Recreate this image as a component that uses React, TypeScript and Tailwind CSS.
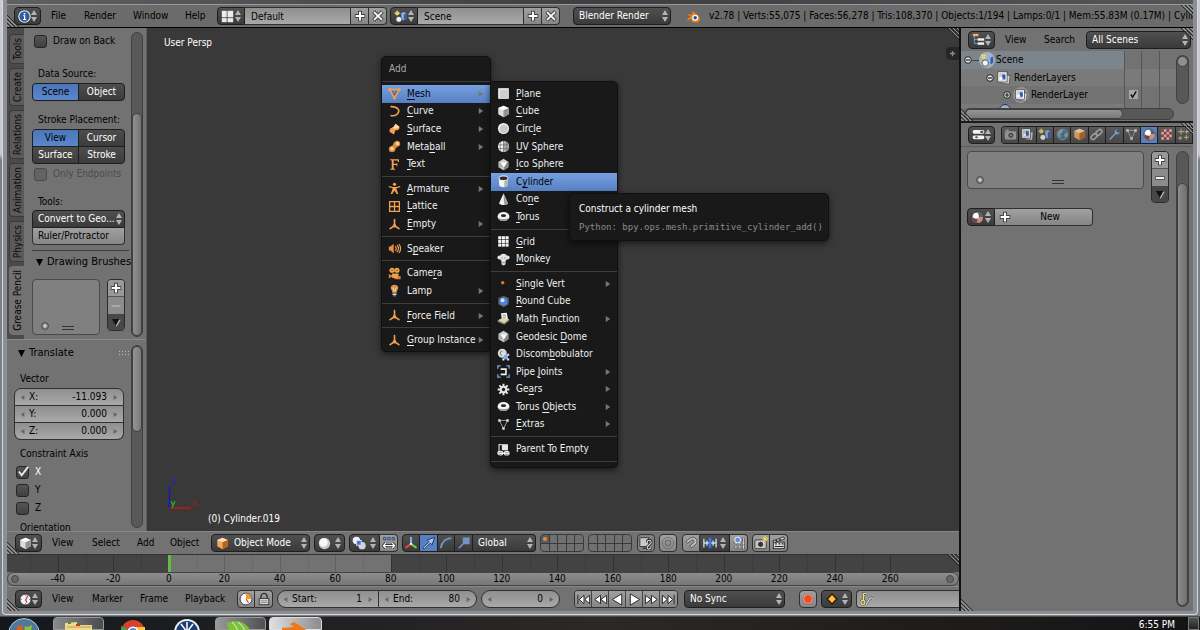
import React, { useState } from "react";

/* ---------- icons ---------- */

type IconProps = { name: string; className?: string };

const O = "#f0a050";

const glyphs: Record<string, React.ReactNode> = {
  info: (
    <g>
      <circle cx="8" cy="8" r="7" fill="#2d5c9c" stroke="#e8eef6" strokeWidth="1.3" />
      <path d="M6.3 6.6h2.6v4.6h1.2v1.2H6.2v-1.2h1.2V7.8H6.3zM7 3.6h2v2H7z" fill="#fff" />
    </g>
  ),
  layout: (
    <g fill="#ececec">
      <rect x="1" y="1" width="6" height="8" />
      <rect x="1" y="10" width="6" height="5" />
      <rect x="8" y="1" width="7" height="8" />
      <rect x="8" y="10" width="7" height="5" />
    </g>
  ),
  scene: (
    <g>
      <circle cx="4" cy="4" r="2.6" fill="#efe98a" />
      <path d="M4 0v8M0 4h8" stroke="#c9c04a" strokeWidth=".8" />
      <path d="M9 4l3-1.5L15 4v7l-3 2-3-2z" fill="#8db3ee" />
      <path d="M12 5.5L15 4v7l-3 2z" fill="#2f5fae" />
      <circle cx="6" cy="11.5" r="3.6" fill="#f4f4f4" stroke="#333" strokeWidth=".8" />
    </g>
  ),
  blender: (
    <g>
      <path d="M.8 11.2l5-4H2.5V5.7h5.4L6 4l1.4-1.5 5.3 4.2c4 3.3 1.8 7.8-2.7 7.8-3.2 0-5.2-2-5-4.4L2.6 12z" fill="#f08019" />
      <circle cx="9.8" cy="9.4" r="3.2" fill="#fff" />
      <circle cx="9.8" cy="9.4" r="1.9" fill="#1d559c" />
    </g>
  ),
  tree: (
    <g>
      <rect x="1" y="1" width="7" height="3" fill="#f0b070" />
      <path d="M3 4v9h4M3 8h4" stroke="#7fa5dc" fill="none" />
      <rect x="7" y="6.5" width="8" height="3" fill="#f2f2f2" />
      <rect x="7" y="11.5" width="8" height="3" fill="#f2f2f2" />
    </g>
  ),
  sliders: (
    <g>
      <rect x=".8" y="2.5" width="14.4" height="4.5" rx="2" fill="#f2f2f2" />
      <rect x="10" y="3.5" width="4" height="2.5" rx="1" fill="#555" />
      <rect x=".8" y="9.2" width="14.4" height="4.5" rx="2" fill="#f2f2f2" />
      <rect x="4" y="10.2" width="3" height="2.5" rx="1" fill="#555" />
    </g>
  ),
  mesh: (
    <g fill="none" stroke={O} strokeWidth="1.8">
      <path d="M2 3h12L8 14z" />
      <path d="M5.5 4.5L8 10l2.5-5.5" strokeWidth="1" stroke="#8a4a18" />
      <path d="M.5 1.500h3.500v3H.5zM12 1.500h3.500v3H12zM6.500 12h3v3h-3z" fill={O} stroke="none" />
    </g>
  ),
  curve: <path d="M3 2c9-.5 13 5 8 9.500-2 1.600-5 2-8 1.500" fill="none" stroke={O} strokeWidth="2" />,
  surface: (
    <g>
      <path d="M9 1l5 3.500c.5 4-2 4.500-5 4.500L7.500 14 2 11c-.5-4 1-5 4-5.500z" fill={O} />
      <path d="M9 1l5 3.500c-1 2-3 2-5.500 2.500L5 5.800C8 5 9 3 9 1z" fill="#ffd9ae" />
    </g>
  ),
  metaball: (
    <g>
      <path d="M11 1a4 4 0 014 4c0 3-3 3-5 4.500-1 1-.5 5.500-5 5.500a4 4 0 01-4-4c0-4 4-3.500 5-5C6.500 4 8 1 11 1z" fill="#dd8c3e" />
      <circle cx="11.500" cy="4.500" r="2" fill="#ffd9ae" />
      <circle cx="5" cy="10.500" r="2" fill="#ffd9ae" />
    </g>
  ),
  fontobj: <path d="M2.500 1.500h11v3.500h-1.200L11.500 3H7v4.200h3.500V6h1v4h-1V8.500H7V13l1.800.5v1h-6v-1l1.800-.5V3l-2.100-.5z" fill={O} />,
  armature: (
    <g fill={O}>
      <circle cx="8" cy="2.800" r="2" />
      <path d="M1 4.800l5 1.200h4l5-1.200v1.700l-4.700 1.300.5 2 2 5h-2L8 10.800 5.200 14.800h-2l2-5 .5-2L1 6.500z" />
    </g>
  ),
  lattice: <path d="M2 2h12v12H2zM2 8h12M8 2v12" fill="none" stroke={O} strokeWidth="1.600" />,
  empty: (
    <g stroke={O} strokeWidth="2" strokeLinecap="round" fill="none">
      <path d="M8 2v7M8 9.500L2.500 13M8 9.500L13.500 13" />
      <circle cx="8" cy="9.500" r="1.200" fill="#ffd9ae" />
    </g>
  ),
  speaker: (
    <g fill="none" stroke={O} strokeWidth="1.400">
      <path d="M1 5.500h2L7 2v12l-4-3.500H1z" fill="#e09040" stroke="none" />
      <path d="M9 5c1.500 2 1.500 4 0 6M11 3.500c2.500 3 2.500 6 0 9M13.500 2.500c2.500 3.500 2.500 7.500 0 11" />
    </g>
  ),
  camera: (
    <g fill={O}>
      <circle cx="5" cy="4" r="3.200" />
      <circle cx="11" cy="4" r="3.200" />
      <rect x="5" y="8" width="8" height="5.500" />
      <path d="M1 8.500l4 1.500v2l-4 2zM13 11h2.500v4H8v-1.500h5z" fill="#d98230" />
      <path d="M4 4h2M10 4h2" stroke="#6a3a10" />
    </g>
  ),
  lamp: (
    <g>
      <path d="M8 .8c5.500 0 5.500 5 3 7.200V10H5V8C2.500 5.800 2.500.8 8 .8z" fill="#d9924e" />
      <path d="M6 4.500L7.500 9M10 4.500L8.500 9" stroke="#ffe2c0" />
      <path d="M5.500 10.500h5v1.200h-5zM5.500 12.300h5v1.200h-5zM6.500 14h3v1h-3z" fill="#ddd" />
    </g>
  ),
  plane: (
    <g>
      <rect x="1.500" y="1.500" width="13" height="13" fill="#fff" />
      <rect x="3" y="3" width="10.500" height="10.500" fill="#cfcfcf" />
    </g>
  ),
  cube: (
    <g>
      <path d="M8 1l6.500 2.800v7.700L8 15.200 1.500 11.500V3.800z" fill="#dcdcdc" />
      <path d="M8 1l6.500 2.800L8 6.500 1.500 3.800z" fill="#fff" />
      <path d="M8 6.500l6.500-2.700v7.700L8 15.200z" fill="#929292" />
    </g>
  ),
  cubeorange: (
    <g>
      <path d="M8 1l6.500 2.800v7.700L8 15.200 1.500 11.500V3.800z" fill="#f0a860" />
      <path d="M8 1l6.500 2.800L8 6.500 1.500 3.800z" fill="#ffdfba" />
      <path d="M8 6.500l6.500-2.700v7.700L8 15.200z" fill="#b86418" />
    </g>
  ),
  circle: (
    <g>
      <circle cx="8" cy="8" r="6.800" fill="#f6f6f6" />
      <circle cx="8.300" cy="8.500" r="5.300" fill="#c8c8c8" />
    </g>
  ),
  ball: (
    <g>
      <circle cx="8" cy="8" r="7" fill="#c9c9c9" />
      <circle cx="6.800" cy="6.800" r="5.200" fill="#f7f7f7" />
    </g>
  ),
  uvsphere: (
    <g>
      <circle cx="8" cy="8" r="6.800" fill="#efefef" />
      <path d="M8 1.200a6.800 6.800 0 010 13.600z" fill="#a8a8a8" />
      <path d="M8 1v14M1.500 6h13M1.500 10.500h13M4.800 2C3.500 5 3.500 11 4.800 14M11.200 2c1.300 3 1.300 9 0 12" stroke="#666" strokeWidth=".8" fill="none" />
    </g>
  ),
  icosphere: (
    <g>
      <path d="M8 1l6 3.500v7L8 15l-6-3.500v-7z" fill="#d0d0d0" />
      <path d="M4 5.500h8.500L8.500 12z" fill="#fff" />
      <path d="M14 4.500v7L8 15l.5-3L12.500 5.500z" fill="#868686" />
      <path d="M2 4.500L4 5.500 8.500 12 2 11.500z" fill="#b0b0b0" />
    </g>
  ),
  cylinder: (
    <g>
      <path d="M2.500 4v8c0 4 11 4 11 0V4z" fill="#f4f4f4" />
      <path d="M9 5h4.500v7c0 2-2 3-4.500 3z" fill="#b4b4b4" />
      <ellipse cx="8" cy="4" rx="5.500" ry="2.800" fill="#2a2a2a" stroke="#fff" strokeWidth="1.200" />
    </g>
  ),
  cone: (
    <g>
      <path d="M8 .5l5.500 12c-1 3-10 3-11 0z" fill="#f0f0f0" />
      <path d="M8 .5l5.500 12c-.5 1.500-2.500 2.200-4.500 2.200z" fill="#9c9c9c" />
    </g>
  ),
  torus: (
    <g>
      <ellipse cx="8" cy="8" rx="7.300" ry="5.600" fill="#f2f2f2" />
      <path d="M1 9.500c2 5.400 12 5.400 14 0-2 2-12 2-14 0z" fill="#9a9a9a" />
      <ellipse cx="8" cy="7" rx="3.200" ry="1.700" fill="#222" />
    </g>
  ),
  grid: (
    <g fill="#f4f4f4">
      {[1.5, 6, 10.5].map((x) => [1.5, 6, 10.5].map((y) => <rect key={`${x}-${y}`} x={x} y={y} width="3.800" height="3.800" />))}
    </g>
  ),
  monkey: (
    <g fill="#e4e4e4">
      <circle cx="8" cy="5.500" r="4.500" />
      <circle cx="3" cy="5.500" r="2.500" />
      <circle cx="13" cy="5.500" r="2.500" />
      <path d="M5.500 8h5v5.500c-1 2-4 2-5 0z" />
      <path d="M5.500 6h1.500M9 6h1.500M6.500 12h3" stroke="#666" />
    </g>
  ),
  vert: <circle cx="7" cy="7" r="2" fill="#f08a35" stroke="#7a3d0d" strokeWidth=".6" />,
  roundcube: (
    <g>
      <path d="M8 .8l6.500 3v7.700L8 15.200 1.500 11.500V3.800z" fill="#55595f" />
      <circle cx="8" cy="8" r="5" fill="#4d86dd" />
      <circle cx="6.800" cy="6.500" r="2.400" fill="#cfe2ff" />
    </g>
  ),
  math: (
    <g>
      <path d="M5 1.500L12 1l1.500 8L6 10z" fill="#f4f4f4" />
      <path d="M7 4h4M7.500 6.500h3.500" stroke="#777" />
      <path d="M1 10l6-3 8 2-6 5z" fill="#d9d5b0" />
      <path d="M1 10l8 4v1.500L1 12zM9 14l6-5v1.500L9 15.500z" fill="#a5a078" />
    </g>
  ),
  discomb: (
    <g>
      <circle cx="6.500" cy="6.500" r="5.500" fill="#d9d9d9" />
      <path d="M6.500 4a2.500 2.500 0 100 5" fill="none" stroke="#777" strokeWidth="1.200" />
      <rect x="8" y="8.500" width="5.500" height="5.500" fill="#7fa6e6" />
      <path d="M6.500 7h2.500v2.500H6.500zM12.500 7H15v2.500h-2.500zM6.500 13h2.500v2.500H6.500zM12.500 13H15v2.500h-2.500z" fill="#dfe9fb" />
    </g>
  ),
  pipe: (
    <g fill="none">
      <path d="M1 4.500V1h3.500M11.500 1H15v3.500M15 11.500V15h-3.500M4.500 15H1v-3.500" stroke="#7da3e0" strokeWidth="1.500" />
      <path d="M4.500 5h6.500v6.500H4.500" stroke="#f0f0f0" strokeWidth="2" />
    </g>
  ),
  gear: (
    <g>
      <path d="M8 .8v14.400M.8 8h14.400M2.900 2.900l10.200 10.200M13.100 2.900L2.900 13.100" stroke="#e6e6e6" strokeWidth="2.400" />
      <circle cx="8" cy="8" r="4.700" fill="#e6e6e6" />
      <circle cx="8" cy="8" r="2.100" fill="#222" />
    </g>
  ),
  extras: (
    <g fill="none" stroke="#b4b4b4">
      <path d="M3 3h10L8 13z" />
      <path d="M1.500 1.500h3v3h-3zM11.500 1.500h3v3h-3zM6.500 11.500h3v3h-3z" fill="#e0e0e0" stroke="none" />
    </g>
  ),
  parent: (
    <g>
      <rect x="6" y="1.500" width="7.500" height="7.500" fill="#e8e8e8" />
      <path d="M6 2H2.500v8" fill="none" stroke="#cfcfcf" strokeWidth="1.500" />
      <path d="M1.500 12.500h13" stroke="#ededed" strokeWidth="2" />
      <ellipse cx="4" cy="12.500" rx="3" ry="2.200" fill="none" stroke="#ededed" strokeWidth="1.300" />
      <ellipse cx="12" cy="12.500" rx="3" ry="2.200" fill="none" stroke="#ededed" strokeWidth="1.300" />
    </g>
  ),
  renderlayers: (
    <g>
      <path d="M6 4l9 1-1 10-9-1z" fill="#d8d2b8" stroke="#444" strokeWidth=".8" />
      <rect x="1" y="1" width="10.500" height="11.500" fill="#fff" stroke="#333" strokeWidth=".8" />
      <rect x="2.500" y="2.500" width="7.500" height="8.500" fill="#bcd0ee" />
      <path d="M6 4h3.500v5.500H6z" fill="#2c5cab" />
      <circle cx="4.500" cy="8.500" r="1.800" fill="#fff" />
      <circle cx="4" cy="4" r="1.200" fill="#e5da5a" />
    </g>
  ),
  photo: (
    <g>
      <rect x="1" y="4" width="14" height="10" rx="1" fill="#a0a0a0" />
      <rect x="2" y="2" width="4" height="2" fill="#a0a0a0" />
      <circle cx="8.500" cy="9" r="3.800" fill="#3a3a3a" stroke="#c4c4c4" />
      <circle cx="8.500" cy="9" r="1.500" fill="#888" />
    </g>
  ),
  world: (
    <g>
      <circle cx="8" cy="8" r="6.500" fill="#3e6fa9" stroke="#9db9da" strokeWidth=".8" />
      <path d="M3 5c2-3 5-3 6-2L7 6 5 7l1 3-1 2C3 11 2 8 3 5zM10 7l4-1c.5 3-1 5-3 6z" fill="#8fb08a" />
    </g>
  ),
  chain: (
    <g fill="none" stroke="#b4b4b4" strokeWidth="1.800">
      <rect x="-4.200" y="-2.500" width="8.400" height="5" rx="2.500" transform="translate(5 10.500) rotate(-42)" />
      <rect x="-4.200" y="-2.500" width="8.400" height="5" rx="2.500" transform="translate(11 5.500) rotate(-42)" />
    </g>
  ),
  wrench: <path d="M1.500 13L8 6.500C7 3.500 9 1 12 1.500L10.500 4l1.500 1.500L14.500 4c.5 3-2 5-5 4L3.500 14.500c-1.500 1-3-.5-2-1.500z" fill="#8fb0e0" stroke="#2a3c58" strokeWidth=".6" />,
  material: (
    <g>
      <circle cx="8" cy="8" r="6.800" fill="#f0e8e4" stroke="#222" strokeWidth=".8" />
      <path d="M8 8V1.500A6.500 6.500 0 0114.500 8z" fill="#5c5c5c" />
      <path d="M8 8v6.500A6.500 6.500 0 0014.500 8z" fill="#d08a78" />
      <path d="M8 8v6.500A6.500 6.500 0 011.500 8z" fill="#6b4640" />
      <circle cx="6.300" cy="6" r="3.400" fill="#fff" />
    </g>
  ),
  texture: (
    <g>
      <rect x="1.500" y="1.500" width="13" height="13" fill="#d9c4c0" />
      {[0, 1, 2, 3].map((r) => [0, 1].map((c) => <rect key={`${r}${c}`} x={1.5 + c * 6.5 + (r % 2) * 3.25} y={1.5 + r * 3.25} width="3.250" height="3.250" fill="#a02f2f" />))}
    </g>
  ),
  particles: (
    <g stroke="#c4b47a" strokeWidth="1.400">
      <path d="M5 1v7M1.500 4.500h7M12 2v5M9.500 4.500h5M4 10v5M1.500 12.500h5M11.500 8.500v6M8.500 11.500h6" />
    </g>
  ),
  clock: (
    <g>
      <circle cx="8" cy="8" r="6.800" fill="#f3f3f3" stroke="#222" />
      <path d="M8 9l3-6" stroke="#c33" strokeWidth="1.500" />
      <path d="M8 8.500L10 12" stroke="#555" strokeWidth="1.300" />
      <path d="M8 2v1.500M8 12.500V14M2 8h1.500M12.500 8H14" stroke="#555" />
    </g>
  ),
  preview: (
    <g>
      <circle cx="8" cy="8" r="6.800" fill="#f6f6f6" stroke="#333" />
      <path d="M8 8V1.500A6.500 6.500 0 0114.500 8z" fill="#f39a2e" />
      <path d="M8 8l3 4.500" stroke="#c33" strokeWidth="1.200" />
    </g>
  ),
  lock: (
    <g>
      <path d="M4.500 8V5c0-4.500 7-4.500 7 0v3" fill="none" stroke="#333" strokeWidth="1.600" />
      <rect x="2.500" y="7.500" width="11" height="7" fill="#d5d5d5" stroke="#333" />
      <path d="M4 10h8M4 12h8" stroke="#888" />
    </g>
  ),
  pivot: (
    <g>
      <circle cx="5" cy="5" r="4.200" fill="#f2f2f2" />
      <circle cx="11.500" cy="11" r="4.200" fill="#d4d4d4" />
      <rect x="5" y="5" width="5.500" height="5.500" fill="#3f78d8" stroke="#dbe8ff" />
    </g>
  ),
  centers: (
    <g>
      <path d="M1 11h14M4.500 8L1.500 11l3 3M11.500 8l3 3-3 3" stroke="#222" strokeWidth="3" fill="none" />
      <path d="M1.500 11h13M4.500 8L1.500 11l3 3M11.500 8l3 3-3 3" stroke="#fff" strokeWidth="1.500" fill="none" />
      <path d="M1.500 1.500h3v3h-3zM6.500 1.500h3v3h-3zM11.500 1.500h3v3h-3z" fill="#5e8fe0" stroke="#223" strokeWidth=".6" />
    </g>
  ),
  manip: (
    <g fill="none" strokeWidth="2.400" strokeLinecap="round">
      <path d="M8 8.500V2" stroke="#7db2f0" />
      <path d="M8 9l-5.500 4" stroke="#e0483a" />
      <path d="M8 9l5.500 4" stroke="#6ccc4f" />
      <circle cx="8" cy="9" r="1.200" fill="#fff" stroke="none" />
    </g>
  ),
  arrow: <path d="M1 13.500L8 6.500 6 4.500 14.500 1.500 11.500 10l-2-2-7 7z" fill="#a8c6f5" stroke="#1c2c4a" />,
  arc: <path d="M2 14C3 7 7 3 14 2.500" fill="none" stroke="#7595c4" strokeWidth="2" />,
  scale: <path d="M2 14l6-6M7.500 2.500h6v6h-6z" fill="#7595c4" stroke="#7595c4" strokeWidth="1.800" />,
  lockcam: (
    <g>
      <rect x="1" y="2" width="10" height="10" fill="#c9c9c9" stroke="#333" />
      <path d="M4 14h8" stroke="#333" strokeWidth="1.400" />
      <path d="M9.500 7c0-3 4.500-3 4.500 0s-4.500 3-4.500 6 4.500 2 4.500-1" fill="none" stroke="#222" strokeWidth="3" />
      <path d="M9.500 7c0-3 4.500-3 4.500 0s-4.500 3-4.500 6 4.500 2 4.500-1" fill="none" stroke="#e4e4e4" strokeWidth="1.200" />
    </g>
  ),
  prop: (
    <g fill="none" stroke="#6e6e6e">
      <circle cx="8" cy="8" r="6.500" />
      <circle cx="8" cy="8" r="3" strokeWidth="1.400" />
    </g>
  ),
  magnet: <path d="M2 6.500L7 2c5-3 10 3 6.500 7l-4.500 4.500-2-2 4-4.500c1-2-1-3.500-2.500-2.500L4 9z" transform="rotate(6 8 8)" fill="#bcbcbc" stroke="#555" />,
  snapinc: (
    <g>
      <path d="M1 3v10M15 3v10M4.500 5v6M11.500 5v6M1 8h14" stroke="#c9dcf8" strokeWidth="1.500" />
      <path d="M8 2v12" stroke="#3c78e0" strokeWidth="3" />
    </g>
  ),
  snapgrid: (
    <g>
      <path d="M2 8h13M2 12.500h13M4.500 7v8M9 4v11M13 2v13" stroke="#222" strokeWidth="2.200" />
      <path d="M2 8h13M2 12.500h13M4.500 7v8M9 4v11M13 2v13" stroke="#eee" strokeWidth="1" />
      <circle cx="6.500" cy="4.500" r="3.300" fill="#5c92e6" stroke="#fff" />
    </g>
  ),
  snapshot: (
    <g>
      <rect x="1" y="4.500" width="13" height="10" rx="1" fill="#c8c0b4" stroke="#222" strokeWidth=".8" />
      <circle cx="7.500" cy="9.500" r="3.600" fill="#333" stroke="#eee" />
      <path d="M12.500 0v7M9 3.500h7M10.200 1.200l4.600 4.600M14.800 1.200l-4.600 4.600" stroke="#f6e35c" />
    </g>
  ),
  clapper: (
    <g>
      <rect x="1.500" y="7" width="12.500" height="7.500" fill="#ddd" stroke="#222" />
      <path d="M1 5.500L13.500 1l.8 2.400L2 7.500z" fill="#f2f2f2" stroke="#222" />
      <path d="M4 4.500l2 1.500M8 3l2 1.500M3.500 9h2M7.500 9h2M11 9h2M3 12h10" stroke="#222" strokeWidth="1.300" />
    </g>
  ),
  rec: (
    <g>
      <circle cx="8" cy="8" r="5.600" fill="#fff" stroke="#a33" strokeWidth=".8" />
      <circle cx="8" cy="8" r="4.500" fill="#f04a20" />
    </g>
  ),
  diamond: <path d="M8 2.500L13.500 8 8 13.500 2.500 8z" fill="#ffbf3a" stroke="#241300" strokeWidth="1.400" />,
  key: (
    <g fill="none">
      <path d="M5 10V1.500h3M5 4.500h2.500" stroke="#44411c" strokeWidth="2.600" />
      <circle cx="4.500" cy="12" r="2.300" stroke="#44411c" strokeWidth="2.600" />
      <path d="M5 10V1.500h3M5 4.500h2.500" stroke="#e6de96" strokeWidth="1.500" />
      <circle cx="4.500" cy="12" r="2.300" stroke="#e6de96" strokeWidth="1.500" />
      <path d="M8.500 13.500l4-6c1-1.500 2.500-1 3 .5" stroke="#555" strokeWidth="2.800" />
      <path d="M8.500 13.500l4-6c1-1.500 2.500-1 3 .5" stroke="#ddd" strokeWidth="1.300" />
    </g>
  ),
  plus: (
    <g fill="none">
      <path d="M8 2v12M2 8h12" stroke="#444" strokeWidth="4.400" />
      <path d="M8 3v10M3 8h10" stroke="#fff" strokeWidth="2.200" />
    </g>
  ),
  minus: (
    <g fill="none">
      <path d="M1.500 8h13" stroke="#444" strokeWidth="4.600" />
      <path d="M2.500 8h11" stroke="#f4f4f4" strokeWidth="2.400" />
    </g>
  ),
  minusfaint: <path d="M2 8h12" stroke="#a9a9a9" strokeWidth="2.400" />,
  cross: (
    <g fill="none">
      <path d="M3 3l10 10M13 3L3 13" stroke="#444" strokeWidth="4.400" />
      <path d="M3.500 3.500l9 9M12.500 3.500l-9 9" stroke="#fff" strokeWidth="2" />
    </g>
  ),
  down: (
    <g>
      <path d="M1.500 3h13L8 14.500z" fill="#111" />
      <path d="M12 3.500h2.500L8 14.500 7 12.500z" fill="#b8b8b8" />
    </g>
  ),
  first: <path d="M2 3v10M8.500 3.500v9L3.500 8zM14.500 3.500v9L9.500 8z" />,
  prev: <path d="M8 3.500v9L2 8zM14.500 3.500v9L8.500 8z" />,
  back: <path d="M12.500 2v12L2.500 8z" />,
  play: <path d="M3.500 2v12l10-6z" />,
  next: <path d="M8 3.500v9l6-4.500zM1.500 3.500v9L7.500 8z" />,
  last: <path d="M14 3v10M7.500 3.500v9l5-4.500zM1.500 3.500v9l5-4.500z" />,
};

const Icon = ({ name, className = "size-[14px]" }: IconProps) => (
  <svg viewBox="0 0 16 16" aria-hidden="true" className={`shrink-0 ${className}`}>
    {glyphs[name]}
  </svg>
);

const UpDown = ({ className = "" }: { className?: string }) => (
  <svg viewBox="0 0 6 12" aria-hidden="true" className={`pointer-events-none h-[12px] w-[6px] shrink-0 ${className}`}>
    <path d="M3 0l3 5H0zM3 12l3-5H0z" fill="#b4b4b4" />
  </svg>
);

const Tri = ({ dir, className = "" }: { dir: "left" | "right" | "down"; className?: string }) => (
  <svg viewBox="0 0 8 8" aria-hidden="true" className={`shrink-0 ${className}`}>
    <path d={dir === "left" ? "M7 0v8L1 4z" : dir === "right" ? "M1 0v8l6-4z" : "M0 0h8L4 8z"} fill="currentColor" />
  </svg>
);

const Grip = ({ corner }: { corner: "tr" | "bl" }) => (
  <svg
    viewBox="0 0 12 12"
    aria-hidden="true"
    className={corner === "tr" ? "pointer-events-none absolute top-0 right-0 size-[12px]" : "pointer-events-none absolute bottom-0 left-0 size-[12px]"}
  >
    <g transform={corner === "bl" ? "rotate(180 6 6)" : undefined}>
      <path d="M0 0l12 12M4 0l8 8M8 0l4 4" stroke="#2a2a2a" strokeWidth="1" />
      <path d="M2 0l10 10M6 0l6 6M10 0l2 2" stroke="#9c9c9c" strokeWidth=".9" />
    </g>
  </svg>
);

/* ---------- controls ---------- */

const dark = "border border-[#1e1e1e] bg-linear-to-b from-[#505050] to-[#3a3a3a]";
const light = "border border-[#303030] bg-linear-to-b from-[#a0a0a0] to-[#868686]";
const field = "border border-[#303030] bg-linear-to-b from-[#8f8f8f] to-[#a9a9a9]";

const EditorButton = ({ icon, label }: { icon: string; label: string }) => (
  <button type="button" aria-label={label} className={`flex h-[18px] w-[27px] shrink-0 items-center justify-between rounded px-[3px] ${dark}`}>
    <Icon name={icon} className="size-[13px]" />
    <UpDown />
  </button>
);

const IconButton = ({ icon, label, className = "" }: { icon: string; label: string; className?: string }) => (
  <button type="button" aria-label={label} className={`flex h-[18px] w-[18px] shrink-0 items-center justify-center ${className}`}>
    <Icon name={icon} className="size-[14px]" />
  </button>
);

const DropDown = ({ label, value, icon, className = "" }: { label: string; value: string; icon?: string; className?: string }) => (
  <div className={`relative flex h-[18px] shrink-0 items-center ${dark} ${className}`}>
    {icon && <Icon name={icon} className="ml-1 size-[13px]" />}
    <select aria-label={label} defaultValue={value} className="h-full min-w-0 flex-1 appearance-none bg-transparent pl-[5px] text-white outline-none">
      <option>{value}</option>
    </select>
    <UpDown className="mr-[2px]" />
  </div>
);

const MenuButtons = ({ items }: { items: [string, string][] }) => (
  <>
    {items.map(([text, width]) => (
      <button key={text} type="button" className={`shrink-0 text-left ${width}`}>
        {text}
      </button>
    ))}
  </>
);

const DataBlock = ({ icon, name }: { icon: string; name: string }) => (
  <div className="flex shrink-0">
    <button type="button" aria-label={`Browse ${name}`} className={`flex h-[18px] w-[28px] items-center justify-between rounded-l px-[3px] ${dark}`}>
      <Icon name={icon} className="size-[13px]" />
      <UpDown />
    </button>
    <input aria-label={name} defaultValue={name} className={`h-[18px] w-[106px] border-l-0 px-[6px] outline-none ${field}`} />
    <IconButton icon="plus" label={`Add ${name}`} className={`border-l-0 p-px ${light}`} />
    <IconButton icon="cross" label={`Remove ${name}`} className={`rounded-r border-l-0 p-px ${light}`} />
  </div>
);

const Check = ({ label, checked, muted }: { label: string; checked?: boolean; muted?: boolean }) => (
  <label className={`flex h-[18px] items-center gap-[6px] ${muted ? "text-[#4c4c4c]" : ""}`}>
    <span className="relative flex">
      <input
        type="checkbox"
        defaultChecked={checked}
        className={`peer size-[13px] appearance-none rounded-[3px] border ${muted ? "border-[#4a4a4a] bg-[#636363]" : "border-[#262626] bg-linear-to-b from-[#555] to-[#404040]"}`}
      />
      <svg viewBox="0 0 14 14" aria-hidden="true" className="pointer-events-none absolute bottom-px left-px hidden size-[13px] peer-checked:block">
        <path d="M2 7l3 4L12 2" fill="none" stroke="#ececec" strokeWidth="2" />
      </svg>
    </span>
    <span className={checked ? "text-white" : ""}>{label}</span>
  </label>
);

const NumberField = ({ label, value, className = "" }: { label: string; value: string; className?: string }) => (
  <label className={`flex shrink-0 items-center px-[5px] ${field} ${className}`}>
    <Tri dir="left" className="size-[5px] text-[#666]" />
    <span className="ml-1">{label}</span>
    <input aria-label={label || "Current frame"} defaultValue={value} className="mr-[6px] w-0 min-w-0 flex-1 bg-transparent text-right outline-none" />
    <Tri dir="right" className="size-[5px] text-[#666]" />
  </label>
);

const ToggleGroup = ({ options, name }: { options: string[]; name: string }) => {
  const [active, setActive] = useState(options[0]);
  return (
    <div role="group" aria-label={name} className="grid w-[93px] grid-cols-2 gap-px overflow-hidden rounded border border-[#1e1e1e] bg-[#1e1e1e]">
      {options.map((o) => (
        <button
          key={o}
          type="button"
          aria-pressed={o === active}
          onClick={() => setActive(o)}
          className={
            o === active
              ? "h-4 bg-linear-to-b from-[#4c76ba] to-[#5b86cc] text-black"
              : "h-4 bg-linear-to-b from-[#4d4d4d] to-[#3c3c3c] text-white"
          }
        >
          {o}
        </button>
      ))}
    </div>
  );
};

const ListButtons = ({ faint }: { faint?: boolean }) => (
  <div className="flex w-[18px] shrink-0 flex-col overflow-hidden rounded border border-[#2c2c2c]">
    <button type="button" aria-label="Add slot" className="flex h-[17px] items-center justify-center border-b border-[#555] bg-[#999]">
      <Icon name="plus" />
    </button>
    <button type="button" aria-label="Remove slot" className="flex h-[17px] items-center justify-center bg-[#8c8c8c]">
      <Icon name={faint ? "minusfaint" : "minus"} className="size-[12px]" />
    </button>
    <button type="button" aria-label="Slot specials" className="flex h-[16px] items-center justify-center bg-[#474747]">
      <Icon name="down" className="size-[11px]" />
    </button>
  </div>
);

const ListBox = ({ className = "" }: { className?: string }) => (
  <div className={`flex items-end rounded border border-[#4a4a4a] bg-[#808080] px-[8px] pb-1 ${className}`}>
    <svg viewBox="0 0 8 8" aria-hidden="true" className="size-[8px]">
      <circle cx="4" cy="4" r="3.500" fill="none" stroke="#444" strokeWidth=".8" />
      <path d="M4 2v4M2 4h4" stroke="#ddd" strokeWidth="1.200" />
    </svg>
    <div className="flex flex-1 justify-center pr-1">
      <div className="h-[4px] w-[12px] border-y border-[#333]" />
    </div>
  </div>
);

/* ---------- menus ---------- */

type Item = { icon: string; text: string; key?: number; sub?: boolean; active?: boolean } | null;

const addItems: Item[] = [
  { icon: "mesh", text: "Mesh", key: 0, sub: true, active: true },
  { icon: "curve", text: "Curve", key: 0, sub: true },
  { icon: "surface", text: "Surface", key: 0, sub: true },
  { icon: "metaball", text: "Metaball", key: 4, sub: true },
  { icon: "fontobj", text: "Text", key: 0 },
  null,
  { icon: "armature", text: "Armature", key: 0, sub: true },
  { icon: "lattice", text: "Lattice", key: 0 },
  { icon: "empty", text: "Empty", key: 0, sub: true },
  null,
  { icon: "speaker", text: "Speaker", key: 1 },
  null,
  { icon: "camera", text: "Camera", key: 4 },
  { icon: "lamp", text: "Lamp", sub: true },
  null,
  { icon: "empty", text: "Force Field", key: 0, sub: true },
  null,
  { icon: "empty", text: "Group Instance", key: 0, sub: true },
];

const meshItems: Item[] = [
  { icon: "plane", text: "Plane", key: 0 },
  { icon: "cube", text: "Cube", key: 0 },
  { icon: "circle", text: "Circle", key: 4 },
  { icon: "uvsphere", text: "UV Sphere", key: 0 },
  { icon: "icosphere", text: "Ico Sphere", key: 0 },
  { icon: "cylinder", text: "Cylinder", key: 1, active: true },
  { icon: "cone", text: "Cone", key: 2 },
  { icon: "torus", text: "Torus", key: 0 },
  null,
  { icon: "grid", text: "Grid", key: 0 },
  { icon: "monkey", text: "Monkey", key: 0 },
  null,
  { icon: "vert", text: "Single Vert", key: 0, sub: true },
  { icon: "roundcube", text: "Round Cube", key: 0 },
  { icon: "math", text: "Math Function", key: 5, sub: true },
  { icon: "icosphere", text: "Geodesic Dome", key: 9 },
  { icon: "discomb", text: "Discombobulator", key: 6 },
  { icon: "pipe", text: "Pipe Joints", key: 5, sub: true },
  { icon: "gear", text: "Gears", key: 2, sub: true },
  { icon: "torus", text: "Torus Objects", key: 6, sub: true },
  { icon: "extras", text: "Extras", key: 0, sub: true },
  null,
  { icon: "parent", text: "Parent To Empty" },
];

const MenuList = ({ items, className }: { items: Item[]; className: string }) => (
  <div role="menu" className={`flex flex-col ${className}`}>
    {items.map((it, i) =>
      it === null ? (
        <div key={i} role="separator" className="flex h-[7px] items-center">
          <div className="h-px w-full bg-[#3e3e3e]" />
        </div>
      ) : (
        <button
          key={i}
          type="button"
          role="menuitem"
          className={`flex min-h-0 flex-1 items-center px-[6px] text-left leading-none ${
            it.active ? "bg-linear-to-b from-[#76a0e2] to-[#5680c2] text-black" : "text-[#efefef]"
          }`}
        >
          <Icon name={it.icon} className="mr-[6px] size-[13px]" />
          <span className="flex-1 whitespace-nowrap">
            {it.key === undefined ? (
              it.text
            ) : (
              <>
                {it.text.slice(0, it.key)}
                <span className="underline underline-offset-2">{it.text[it.key]}</span>
                {it.text.slice(it.key + 1)}
              </>
            )}
          </span>
          {it.sub && <Tri dir="right" className="size-[6px] text-[#777]" />}
        </button>
      ),
    )}
  </div>
);

/* ---------- areas ---------- */

const TopBar = () => (
  <header className="relative flex h-[23px] shrink-0 items-center overflow-hidden border-b border-black bg-[#6b6b6b] pl-[7px] whitespace-nowrap">
    <Grip corner="bl" />
    <EditorButton icon="info" label="Editor type" />
    <nav className="ml-[10px] flex">
      <MenuButtons items={[["File", "w-[33px]"], ["Render", "w-[49px]"], ["Window", "w-[52px]"], ["Help", "w-[32px]"]]} />
    </nav>
    <DataBlock icon="layout" name="Default" />
    <div className="w-[3px] shrink-0" />
    <DataBlock icon="scene" name="Scene" />
    <DropDown label="Render engine" value="Blender Render" className="ml-[13px] w-[98px] rounded" />
    <Icon name="blender" className="ml-[15px] size-[15px]" />
    <p className="ml-2">
      v2.78 | Verts:55,075 | Faces:56,278 | Tris:108,370 | Objects:1/194 | Lamps:0/1 | Mem:55.83M (0.17M) | Cylinder.019
    </p>
    <Grip corner="tr" />
  </header>
);

const tabs = ["Tools", "Create", "Relations", "Animation", "Physics", "Grease Pencil"];

const ToolShelf = () => (
  <aside className="flex w-[140px] shrink-0 flex-col border-r border-[#5a5a5a] bg-[#727272]">
    <div className="flex h-[312px] shrink-0 overflow-hidden border-b border-[#8a8a8a]">
      <div role="tablist" aria-orientation="vertical" className="flex w-[17px] shrink-0 flex-col gap-1 bg-[#4a4a4a] pt-[6px] pl-[2px]">
        {tabs.map((t) => (
          <button
            key={t}
            type="button"
            role="tab"
            aria-selected={t === "Grease Pencil"}
            className={`flex shrink-0 items-center justify-center rounded-l border-y border-l py-[3px] ${
              t === "Grease Pencil" ? "border-[#727272] bg-[#727272] text-black" : "border-[#3a3a3a] bg-[#5a5a5a] text-[#0c0c0c]"
            }`}
          >
            <span className="block rotate-180 leading-[13px] whitespace-nowrap [writing-mode:vertical-rl]">{t}</span>
          </button>
        ))}
      </div>
      <div className="flex w-[107px] shrink-0 flex-col pt-1 pl-2">
        <div className="pl-[2px]">
          <Check label="Draw on Back" />
        </div>
        <p className="mt-[17px] h-4 shrink-0 pl-[6px]">Data Source:</p>
        <ToggleGroup name="Data Source" options={["Scene", "Object"]} />
        <p className="mt-3 h-4 shrink-0 pl-[6px]">Stroke Placement:</p>
        <ToggleGroup name="Stroke Placement" options={["View", "Cursor", "Surface", "Stroke"]} />
        <div className="mt-px pl-[2px]">
          <Check label="Only Endpoints" muted />
        </div>
        <p className="mt-3 h-[15px] shrink-0 pl-[6px]">Tools:</p>
        <DropDown label="Convert" value="Convert to Geo..." className="w-[93px] rounded-t" />
        <button type="button" className={`h-[17px] w-[93px] shrink-0 rounded-b border-t-0 pl-[5px] text-left leading-none ${light}`}>
          Ruler/Protractor
        </button>
        <div className="mt-[5px] h-px w-[97px] shrink-0 bg-[#3c3c3c]" />
        <h2 className="mt-[3px] flex h-4 shrink-0 items-center gap-1 pl-1 text-[11px] whitespace-nowrap">
          <Tri dir="down" className="size-[7px]" />
          Drawing Brushes
        </h2>
        <div className="mt-[9px] flex items-start gap-[7px]">
          <ListBox className="h-[56px] w-[68px]" />
          <ListButtons faint />
        </div>
      </div>
      <div className="mt-1 mb-[2px] flex w-[12px] flex-col rounded-full border border-[#404040] bg-[#585858]">
        <div className="mt-[80px] flex-1 rounded-full border border-[#404040] bg-linear-to-r from-[#909090] to-[#747474]" />
      </div>
    </div>
    <div className="flex min-h-0 flex-1 overflow-hidden pt-[5px]">
      <div className="flex w-[124px] shrink-0 flex-col pl-[7px]">
        <h2 className="flex h-4 shrink-0 items-center gap-1 pl-1 text-[11px]">
          <Tri dir="down" className="size-[7px]" />
          <span className="flex-1">Translate</span>
          <svg viewBox="0 0 10 4" aria-hidden="true" className="mr-[2px] h-1 w-[10px]">
            <path d="M0 .5h10M0 3.500h10" stroke="#bbb" strokeDasharray="1 2" />
          </svg>
        </h2>
        <p className="mt-[11px] h-4 shrink-0 pl-[6px]">Vector</p>
        <div className="flex flex-col">
          <NumberField label="X:" value="-11.093" className="h-[18px] w-[110px] rounded-t-[7px]" />
          <NumberField label="Y:" value="0.000" className="h-[17px] w-[110px] border-t-0" />
          <NumberField label="Z:" value="0.000" className="h-[17px] w-[110px] rounded-b-[7px] border-t-0" />
        </div>
        <p className="mt-[7px] h-4 shrink-0 pl-[6px]">Constraint Axis</p>
        <div className="pl-[2px]">
          <Check label="X" checked />
          <Check label="Y" />
          <Check label="Z" />
        </div>
        <p className="mt-1 shrink-0 pl-[6px]">Orientation</p>
      </div>
      <div className="mb-[3px] flex w-[12px] flex-col rounded-full border border-[#404040] bg-[#585858]">
        <div className="h-[86px] rounded-full border border-[#404040] bg-linear-to-r from-[#949494] to-[#7a7a7a]" />
      </div>
    </div>
  </aside>
);

const menuShell = "absolute border border-[#101010] bg-[#191919] shadow-[0_2px_6px_rgba(0,0,0,0.6)]";

const Viewport = () => (
  <section aria-label="3D View" className="relative flex min-w-0 flex-1 flex-col justify-between bg-[#393939] text-white">
    <p className="pt-2 pl-[17px]">User Persp</p>
    <p className="pb-[5px] pl-[61px]">(0) Cylinder.019</p>
    <svg viewBox="0 0 34 36" aria-hidden="true" className="absolute bottom-[18px] left-[18px] h-[36px] w-[34px]">
      <path d="M4.500 9v22" stroke="#1a1ab8" strokeWidth="1.500" fill="none" />
      <path d="M5 31h21" stroke="#c01616" strokeWidth="1.500" fill="none" />
      <path d="M6.500 2.500h4L6.500 6.500h4" stroke="#2222c8" fill="none" />
      <path d="M28 24.500l4 4M32 24.500l-4 4" stroke="#c01616" fill="none" />
      <path d="M6 24l2 4M10 24l-3 7" stroke="#22b822" strokeWidth="1.200" fill="none" />
    </svg>
    <button type="button" aria-label="Show properties" className="absolute top-[19px] right-0 flex size-[13px] items-center justify-center rounded-l bg-[#262626]">
      <svg viewBox="0 0 8 8" aria-hidden="true" className="size-[7px]">
        <path d="M4 1v6M1 4h6" stroke="#8c8c8c" strokeWidth="1.500" />
      </svg>
    </button>
    <Grip corner="tr" />

    <div className={`${menuShell} top-[28px] left-[234px] w-[110px] rounded-[5px] pb-[2px]`}>
      <h2 className="flex h-[25px] items-center border-b border-[#3e3e3e] pl-[7px] text-[#a8a8a8]">Add</h2>
      <MenuList items={addItems} className="mt-[3px] h-[264px]" />
    </div>
    <div className={`${menuShell} top-[53px] left-[343px] w-[128px] rounded-[5px] rounded-tl-none pt-[3px]`}>
      <MenuList items={meshItems} className="h-[373px]" />
      <div className="mt-[3px] h-[6px] border-t border-[#3e3e3e]" />
    </div>
    <div role="tooltip" className={`${menuShell} top-[165px] left-[422px] w-[260px] rounded-[5px] px-[9px] py-[7px] whitespace-nowrap`}>
      <p className="h-4 leading-4">Construct a cylinder mesh</p>
      <p className="mt-[2px] h-[14px] font-['DejaVu_Sans_Mono',monospace] text-[9px] leading-4 text-[#8c8c8c]">
        Python: bpy.ops.mesh.primitive_cylinder_add()
      </p>
    </div>
  </section>
);

const Layers = ({ marked }: { marked?: boolean }) => (
  <div className="grid h-[18px] w-[44px] shrink-0 grid-cols-5 grid-rows-2 gap-px overflow-hidden rounded border border-[#3a3a3a] bg-[#3a3a3a]">
    {Array.from({ length: 10 }, (_, i) => (
      <button key={i} type="button" aria-label={`Layer ${i + 1}`} className={i === 0 && marked ? "flex items-center justify-center bg-[#5c5c5c]" : "bg-[#707070]"}>
        {i === 0 && marked && <span className="size-1 rounded-full bg-[#f08a30]" />}
      </button>
    ))}
  </div>
);

const ViewHeader = () => (
  <div className="relative flex h-[23px] shrink-0 items-center overflow-hidden border-t border-[#888] bg-[#727272] pl-2 whitespace-nowrap">
    <Grip corner="bl" />
    <EditorButton icon="cube" label="Editor type" />
    <nav className="ml-[10px] flex">
      <MenuButtons items={[["View", "w-[40px]"], ["Select", "w-[45px]"], ["Add", "w-[33px]"], ["Object", "w-[41px]"]]} />
    </nav>
    <DropDown label="Mode" value="Object Mode" icon="cubeorange" className="w-[99px] rounded" />
    <button type="button" aria-label="Viewport shading" className={`ml-1 flex h-[18px] w-[31px] shrink-0 items-center justify-between rounded px-[3px] ${dark}`}>
      <Icon name="ball" className="size-[13px]" />
      <UpDown />
    </button>
    <button type="button" aria-label="Pivot" className={`ml-1 flex h-[18px] w-[31px] shrink-0 items-center justify-between rounded-l pr-[3px] pl-[2px] ${dark}`}>
      <Icon name="pivot" />
      <UpDown />
    </button>
    <IconButton icon="centers" label="Manipulate centers" className={`rounded-r border-l-0 ${light}`} />
    <div className="ml-1 flex shrink-0">
      <IconButton icon="manip" label="Manipulator" className={`rounded-l ${dark}`} />
      <button type="button" aria-label="Translate" className="flex h-[18px] w-[17px] items-center justify-center border-y border-[#1e1e1e] bg-[#5680c2]">
        <Icon name="arrow" />
      </button>
      <IconButton icon="arc" label="Rotate" className={dark} />
      <IconButton icon="scale" label="Scale" className={`border-l-0 ${dark}`} />
      <DropDown label="Orientation" value="Global" className="w-[63px] rounded-r border-l-0" />
    </div>
    <div className="ml-1 flex shrink-0 gap-1">
      <Layers marked />
      <Layers />
    </div>
    <IconButton icon="lockcam" label="Lock camera" className="ml-[5px] rounded border border-[#333] bg-[#828282]" />
    <IconButton icon="prop" label="Proportional editing" className={`ml-1 rounded ${light}`} />
    <IconButton icon="magnet" label="Snap" className={`ml-[5px] rounded-l ${light}`} />
    <button type="button" aria-label="Snap element" className={`flex h-[18px] w-[30px] shrink-0 items-center justify-between border-l-0 px-[3px] ${dark}`}>
      <Icon name="snapinc" />
      <UpDown />
    </button>
    <IconButton icon="snapgrid" label="Snap to grid" className={`rounded-r border-l-0 ${light}`} />
    <IconButton icon="snapshot" label="Render view" className={`ml-1 rounded-l ${light}`} />
    <IconButton icon="clapper" label="Render animation" className={`rounded-r border-l-0 ${light}`} />
  </div>
);

const frames = Array.from({ length: 16 }, (_, i) => -40 + i * 20);

const Timeline = () => (
  <div className="relative shrink-0 bg-[#727272]">
    <div className="flex h-[18px] border-t border-[#333] bg-[#434343] pr-[41px] pl-[23px]">
      {frames.map((f) => {
        const first = f > 0 && f <= 80;
        const second = f >= 0 && f < 80;
        return (
          <div key={f} className="flex flex-1">
            <div className={`flex-1 border-l ${first ? "border-[#6a6a6a] bg-[#727272]" : "border-[#3c3c3c]"}`} />
            <div className={`flex-1 ${f === 0 ? "border-l-[3px] border-[#5fbf3f]" : second ? "border-l border-[#606060]" : "border-l border-[#333]"} ${second ? "bg-[#727272]" : ""}`} />
          </div>
        );
      })}
    </div>
    <div className="relative flex h-[14px] items-center rounded-full border border-[#444] bg-linear-to-b from-[#8d8d8d] to-[#777] pr-[40px] pl-[22px]">
      <span className="absolute left-[3px] size-[8px] rounded-full border border-[#4a4a4a] bg-[#666]" />
      {frames.map((f) => (
        <span key={f} className="flex-1 text-center leading-none text-black">
          {f}
        </span>
      ))}
      <span className="absolute right-[4px] size-[8px] rounded-full border border-[#4a4a4a] bg-[#666]" />
    </div>
    <Grip corner="tr" />
  </div>
);

const TimelineHeader = () => (
  <div className="relative flex h-[25px] shrink-0 items-center overflow-hidden border-t border-[#888] bg-[#727272] pl-2 whitespace-nowrap">
    <Grip corner="bl" />
    <EditorButton icon="clock" label="Editor type" />
    <nav className="ml-[10px] flex">
      <MenuButtons items={[["View", "w-[40px]"], ["Marker", "w-[48px]"], ["Frame", "w-[45px]"], ["Playback", "w-[52px]"]]} />
    </nav>
    <IconButton icon="preview" label="Use preview range" className={`rounded-l ${light}`} />
    <IconButton icon="lock" label="Lock time cursor" className={`rounded-r border-l-0 ${light}`} />
    <NumberField label="Start:" value="1" className="ml-1 h-[18px] w-[102px] rounded-l-full" />
    <NumberField label="End:" value="80" className="h-[18px] w-[98px] rounded-r-full border-l-0" />
    <NumberField label="" value="0" className="ml-1 h-[18px] w-[79px] rounded-full" />
    <div className="ml-[14px] flex shrink-0 overflow-hidden rounded border border-[#303030]">
      {["first", "prev", "back", "play", "next", "last"].map((n) => (
        <button key={n} type="button" aria-label={n} className="flex h-4 w-[17px] items-center justify-center border-r border-[#444] bg-linear-to-b from-[#a0a0a0] to-[#868686] last:border-r-0">
          <Icon name={n} className="size-[15px] fill-white stroke-[#222]" />
        </button>
      ))}
    </div>
    <DropDown label="Sync mode" value="No Sync" className="ml-[6px] w-[101px] rounded" />
    <IconButton icon="rec" label="Auto keyframe" className={`ml-[14px] rounded ${light}`} />
    <button type="button" aria-label="Keying type" className={`ml-1 flex h-[18px] w-[31px] shrink-0 items-center justify-between rounded px-[3px] ${dark}`}>
      <Icon name="diamond" />
      <UpDown />
    </button>
    <label className={`ml-1 flex h-[18px] min-w-0 flex-1 items-center rounded-l border-r-0 px-[2px] ${field}`}>
      <Icon name="key" />
      <input aria-label="Active keying set" className="w-0 flex-1 bg-transparent outline-none" />
    </label>
  </div>
);

const Expander = ({ open }: { open?: boolean }) => (
  <svg viewBox="0 0 8 8" aria-hidden="true" className="size-[8px] shrink-0">
    <circle cx="4" cy="4" r="3.300" fill="#ddd" stroke="#222" />
    <path d={open ? "M2 4h4" : "M2 4h4M4 2v4"} stroke="#222" strokeWidth="1.200" />
  </svg>
);

const Outliner = () => (
  <section aria-label="Outliner" className="relative shrink-0 border-b-2 border-[#1c1c1c] bg-[#727272] pb-px">
    <div className="relative flex h-[23px] items-center pl-[7px]">
      <EditorButton icon="tree" label="Editor type" />
      <button type="button" className="ml-[10px] w-[39px] text-left">
        View
      </button>
      <button type="button" className="w-[42px] text-left">
        Search
      </button>
      <DropDown label="Display mode" value="All Scenes" className="mr-[2px] min-w-0 flex-1 rounded" />
      <Grip corner="tr" />
    </div>
    <div className="flex h-[57px] overflow-hidden">
      <div className="flex min-w-0 flex-1 flex-col">
        <div className="flex h-[18px] shrink-0 items-center bg-[#7c848c] pl-[3px]">
          <Expander open />
          <span className="h-px w-[7px] bg-[#444]" />
          <span className="mr-px flex size-[16px] items-center justify-center rounded-full bg-[#a9b0b8]">
            <Icon name="scene" />
          </span>
          Scene
        </div>
        <div className="flex h-[17px] shrink-0 items-center gap-[3px] bg-[#7a7a7a] pl-[25px]">
          <Expander open />
          <Icon name="renderlayers" />
          RenderLayers
        </div>
        <div className="flex h-[18px] shrink-0 items-center pl-[42px]">
          <Expander />
          <span className="mx-[2px] flex size-[16px] items-center justify-center rounded-full bg-[#929292]">
            <Icon name="renderlayers" className="size-[13px]" />
          </span>
          RenderLayer
        </div>
        <div className="h-[18px] shrink-0 bg-[#7a7a7a] pl-[38px]">
          <svg viewBox="0 0 12 12" aria-hidden="true" className="size-[12px]">
            <circle cx="6" cy="6" r="5.500" fill="#9fb0c8" stroke="#2a3548" />
          </svg>
        </div>
      </div>
      <div className="grid w-[52px] shrink-0 grid-cols-3 bg-[linear-gradient(#727272_18px,#7a7a7a_18px,#7a7a7a_35px,#727272_35px)]">
        <div className="border-l border-[#555] pt-[39px] pl-[4px]">
          <input type="checkbox" aria-label="Render RenderLayer" defaultChecked className="peer block size-[9px] appearance-none bg-[#a8a8a8]" />
          <svg viewBox="0 0 10 10" aria-hidden="true" className="pointer-events-none -mt-[9px] hidden size-[9px] peer-checked:block">
            <path d="M2 5l2 3 4-6.500" stroke="#111" strokeWidth="1.600" fill="none" />
          </svg>
        </div>
        <div className="border-l border-[#555]" />
        <div className="border-l border-[#555]" />
      </div>
      <div className="mt-1 mr-1 mb-1 w-[13px] shrink-0 rounded-full border border-[#404040] bg-[#585858]">
        <div className="size-[11px] rounded-full border border-[#404040] bg-[#909090]" />
      </div>
    </div>
    <div className="mr-[19px] ml-[3px] flex h-[12px] rounded-full border border-[#404040] bg-[#585858]">
      <div className="w-[76%] rounded-full border border-[#404040] bg-linear-to-b from-[#959595] to-[#7a7a7a]" />
    </div>
    <Grip corner="bl" />
  </section>
);

const propTabs = ["photo", "renderlayers", "scene", "world", "cubeorange", "chain", "wrench", "extras", "material", "texture", "particles"];

const Properties = () => (
  <section aria-label="Properties" className="relative flex min-h-0 flex-1 flex-col bg-[#727272]">
    <div className="flex h-[23px] shrink-0 items-center overflow-hidden pl-[7px]">
      <EditorButton icon="sliders" label="Editor type" />
      <div role="tablist" className="ml-[6px] flex flex-1 overflow-hidden rounded-l border-y border-l border-[#1e1e1e]">
        {propTabs.map((t) => (
          <button
            key={t}
            type="button"
            role="tab"
            aria-label={t}
            aria-selected={t === "material"}
            className={`flex h-4 flex-1 items-center justify-center border-r border-[#1e1e1e] ${
              t === "material" ? "bg-[#5680c2]" : "bg-linear-to-b from-[#5a5a5a] to-[#484848]"
            }`}
          >
            <Icon name={t} className={t === "material" ? "size-[13px]" : "size-[13px] opacity-80"} />
          </button>
        ))}
      </div>
    </div>
    <Grip corner="tr" />
    <div className="flex min-h-0 flex-1 border-t border-[#5c5c5c]">
      <div className="min-w-0 flex-1 pt-1 pl-[6px]">
        <div className="flex items-start gap-[7px]">
          <ListBox className="h-[38px] min-w-0 flex-1" />
          <ListButtons />
        </div>
        <div className="mt-[5px] flex">
          <button type="button" aria-label="Browse material" className={`flex h-[18px] w-[28px] items-center justify-between rounded-l px-[3px] ${dark}`}>
            <Icon name="material" className="size-[13px]" />
            <UpDown />
          </button>
          <button type="button" className={`flex h-[18px] w-[98px] items-center rounded-r border-l-0 pl-[3px] ${light}`}>
            <Icon name="plus" />
            <span className="flex-1 pr-[4px] text-center">New</span>
          </button>
        </div>
      </div>
      <div className="mt-1 mr-1 mb-1 ml-[7px] flex w-[13px] shrink-0 flex-col rounded-full border border-[#404040] bg-[#585858]">
        <div className="mt-[31px] flex-1 rounded-full border border-[#404040] bg-linear-to-r from-[#8c8c8c] to-[#6e6e6e]" />
      </div>
    </div>
    <Grip corner="bl" />
  </section>
);

const Taskbar = () => (
  <footer className="flex h-[14px] shrink-0 overflow-hidden border-t border-[#4a4a4a] bg-linear-to-r from-[#14181d] via-[#2c2826] to-[#141414]">
    <button type="button" aria-label="Start" className="ml-[8px] w-[32px] shrink-0">
      <svg viewBox="0 0 32 13" className="h-[13px] w-[32px]">
        <circle cx="16" cy="17" r="15.500" fill="#4f7796" stroke="#a9c4d6" />
        <path d="M9 10c2-2 4-2 6-1l-1 6H8z" fill="#e0592a" />
        <path d="M17 9c2 1 4 1 7-1l-1 7h-7z" fill="#8fbf3c" />
      </svg>
    </button>
    <button type="button" aria-label="Explorer" className="ml-[13px] w-[51px] shrink-0 rounded-t border border-[#999] bg-linear-to-r from-[#8a8a8a] to-[#4c4c4c]">
      <svg viewBox="0 0 50 13" className="h-[13px] w-[50px]">
        <path d="M11 5l12-1v3h15v8H11z" fill="#ecd98c" />
        <path d="M14 4h3v2h-3z" fill="#3a9a3a" />
        <path d="M22 6h4v2h-4z" fill="#c33" />
        <path d="M13 9h24" stroke="#b8a050" />
      </svg>
    </button>
    <button type="button" aria-label="Chrome" className="ml-[15px] w-[28px] shrink-0">
      <svg viewBox="0 0 28 13" className="h-[13px] w-[28px]">
        <circle cx="14" cy="15" r="12" fill="#d8402f" />
        <path d="M14 15L2 17V9z" fill="#3da24a" />
        <path d="M14 10h12v8H14z" fill="#f3c636" />
        <circle cx="14" cy="15" r="5.500" fill="#fff" />
        <circle cx="14" cy="15" r="4" fill="#4a86d8" />
      </svg>
    </button>
    <button type="button" aria-label="Wheel" className="ml-[26px] w-[28px] shrink-0">
      <svg viewBox="0 0 28 13" className="h-[13px] w-[28px]">
        <circle cx="14" cy="15" r="12" fill="#1d3d72" stroke="#e8eef5" strokeWidth="2" />
        <path d="M14 5v10M8 7l6 8M20 7l-6 8" stroke="#fff" strokeWidth="1.500" />
      </svg>
    </button>
    <button type="button" aria-label="CorelDRAW" className="ml-[14px] w-[51px] shrink-0 rounded-t border border-[#999] bg-linear-to-r from-[#9a9a9a] to-[#505050]">
      <svg viewBox="0 0 50 13" className="h-[13px] w-[50px]">
        <path d="M11 5c10-4 20-1 24 9H15c-3-3-4-6-4-9z" fill="#7dc23a" />
        <path d="M16 4c3 3 5 6 6 10M22 4c4 3 6 6 7 10" stroke="#e6f5cf" fill="none" />
      </svg>
    </button>
    <button type="button" aria-label="Blender" className="ml-[3px] w-[53px] shrink-0 rounded-t border border-[#ddd] bg-linear-to-r from-[#e0e0e0] to-[#8c8c8c]">
      <svg viewBox="0 0 52 13" className="h-[13px] w-[52px]">
        <path d="M12 10l12-1-4-3 4-2 14 9H12z" fill="#f0761a" />
      </svg>
    </button>
    <div className="flex-1" />
    <time className="pt-[3px] leading-[10px] text-white">6:55 PM</time>
    <button type="button" aria-label="Show desktop" className="mr-px ml-[13px] w-[11px] border border-[#777] bg-linear-to-b from-[#555] to-[#222]" />
  </footer>
);

export default function App() {
  return (
    <div className="flex h-screen flex-col overflow-hidden bg-[#0c0c0c] font-['DejaVu_Sans_Condensed','DejaVu_Sans',sans-serif] text-[10px] leading-[14px] text-black">
      <div className="flex min-h-0 flex-1 flex-col bg-linear-to-b from-[#c8cad0] from-25% to-[#7b7f86] to-26% px-[2px] pb-px">
        <div className="flex min-h-0 flex-1 flex-col rounded-b border-x border-b border-[#d6d8dc] bg-[#8b8e93] px-[4px] pb-[3px]">
          <div className="h-[5px] shrink-0 border-b border-[#9a9a9a] bg-linear-to-r from-[#5f6064] via-[#3d3d42] to-[#55565a]" />
          <TopBar />
          <div className="flex min-h-0 flex-1">
            <main className="flex min-w-0 flex-1 flex-col">
              <div className="flex min-h-0 flex-1">
                <ToolShelf />
                <Viewport />
              </div>
              <ViewHeader />
              <Timeline />
              <TimelineHeader />
            </main>
            <div className="flex w-[234px] shrink-0 flex-col border-l-2 border-[#111]">
              <Outliner />
              <Properties />
            </div>
          </div>
        </div>
      </div>
      <Taskbar />
    </div>
  );
}
